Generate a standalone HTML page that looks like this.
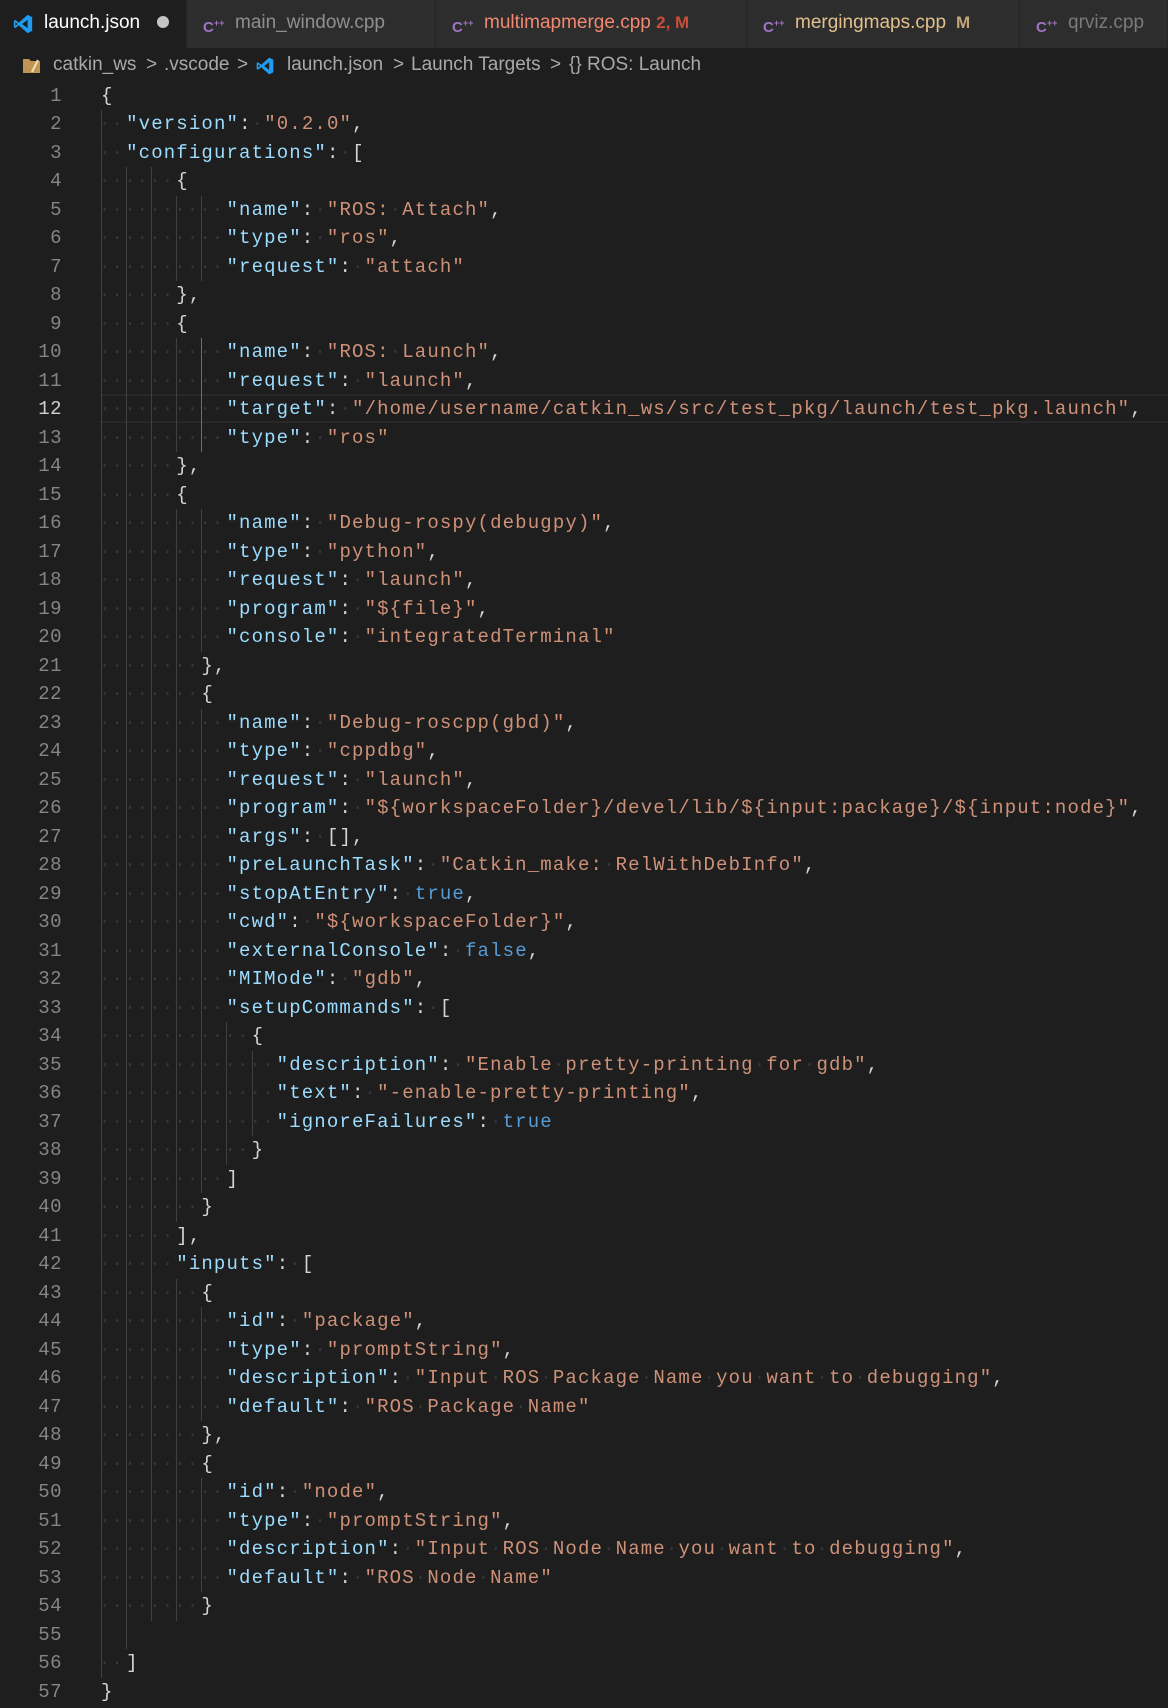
<!DOCTYPE html>
<html><head><meta charset="utf-8"><style>
*{margin:0;padding:0;box-sizing:border-box}
body{width:1168px;height:1708px;background:#1e1e1e;overflow:hidden;position:relative;font-family:"Liberation Sans",sans-serif}
#tabs{position:absolute;left:0;top:0;width:1168px;height:48px;background:#252526}
.tab{position:absolute;top:0;height:48px;background:#2d2d2d;border-right:1px solid #252526;font-size:19px;line-height:46px;color:#8f8f8f;white-space:nowrap}
.tab .ic{position:absolute;top:0;font-size:15px;font-weight:bold;color:#a074c4}
.tab .ic sup{font-size:9px}
#bc{position:absolute;top:48px;left:0;height:33px;line-height:33px;font-size:19px;color:#a9a9a9;white-space:nowrap}
#bc span{position:absolute;top:0}
#code{position:absolute;top:81.75px;left:0;width:1168px}
.L{position:relative;height:28.5px;line-height:28.5px;white-space:pre;font-family:"Liberation Mono",monospace;font-size:19px;letter-spacing:1.15px;color:#d4d4d4}
.L b{position:absolute;left:0;width:62px;text-align:right;font-weight:normal;color:#858585;letter-spacing:0.5px}
.L .c{position:absolute;left:101px;top:0}
.L i{display:inline-block;width:12.55px;height:28.5px;vertical-align:top;color:#363636;font-style:normal;text-indent:-2px;position:relative}
.L i:nth-child(odd){box-shadow:inset 1px 0 0 #404040}
.L i.a{box-shadow:inset 1px 0 0 #6e6e6e}
.L u{text-decoration:none;color:#363636}
.k{color:#9cdcfe}.s{color:#ce9178}.t{color:#569cd6}
#cur{position:absolute;left:100px;top:394.25px;width:1068px;height:28.5px;border-top:2px solid #282828;border-bottom:2px solid #282828}
</style></head><body>
<div id="tabs">
 <div class="tab" style="left:0;width:187px;background:#1e1e1e;color:#ffffff">
  <svg style="position:absolute;left:12px;top:13px" width="22" height="22" viewBox="0 0 24 24"><path d="M17 2 L22 4.5 V19.5 L17 22 L7.5 13.5 L3.5 16.5 L2 15.5 V8.5 L3.5 7.5 L7.5 10.5 Z M17 7.5 L11 12 L17 16.5 Z M3.8 10 V14 L6 12 Z" fill="#1f9cf0" fill-rule="evenodd"/></svg>
  <span style="position:absolute;left:44px">launch.json</span>
  <span style="position:absolute;left:157px;top:16px;width:12px;height:12px;border-radius:6px;background:#c5c5c5"></span>
 </div>
 <div class="tab" style="left:187px;width:249px"><span class="ic" style="left:16px">C<sup>++</sup></span><span style="position:absolute;left:48px">main_window.cpp</span></div>
 <div class="tab" style="left:436px;width:311px"><span class="ic" style="left:16px">C<sup>++</sup></span><span style="position:absolute;left:48px;color:#f48771">multimapmerge.cpp <span style="color:#c74e39;font-size:17px;font-weight:bold">2, M</span></span></div>
 <div class="tab" style="left:747px;width:273px"><span class="ic" style="left:16px">C<sup>++</sup></span><span style="position:absolute;left:48px;color:#e2c08d">mergingmaps.cpp <span style="font-size:17px;font-weight:bold;color:#c4a478">&nbsp;M</span></span></div>
 <div class="tab" style="left:1020px;width:148px"><span class="ic" style="left:16px">C<sup>++</sup></span><span style="position:absolute;left:48px;color:#7a7a7a">qrviz.cpp</span></div>
</div>
<div id="bc" style="width:1168px">
 <svg style="position:absolute;left:22px;top:7px" width="20" height="20" viewBox="0 0 20 20"><path d="M1 4 H7 L9 6 H18 V18 H1 Z" fill="#c09553"/><path d="M10 17 L16 5" stroke="#f0e0b0" stroke-width="2"/></svg>
 <span style="left:53px">catkin_ws</span><span style="left:146px">&gt;</span>
 <span style="left:164px">.vscode</span><span style="left:237px">&gt;</span>
 <svg style="position:absolute;left:255px;top:8px" width="20" height="20" viewBox="0 0 24 24"><path d="M17 2 L22 4.5 V19.5 L17 22 L7.5 13.5 L3.5 16.5 L2 15.5 V8.5 L3.5 7.5 L7.5 10.5 Z M17 7.5 L11 12 L17 16.5 Z M3.8 10 V14 L6 12 Z" fill="#1f9cf0" fill-rule="evenodd"/></svg>
 <span style="left:287px">launch.json</span><span style="left:393px">&gt;</span>
 <span style="left:411px">Launch Targets</span><span style="left:550px">&gt;</span>
 <span style="left:569px">{} ROS: Launch</span>
</div>
<div id="cur"></div>
<div id="code">
<div class="L"><b>1</b><span class="c">{</span></div>
<div class="L"><b>2</b><span class="c"><i>·</i><i>·</i><span class="k">"version"</span>:<u>·</u><span class="s">"0.2.0"</span>,</span></div>
<div class="L"><b>3</b><span class="c"><i>·</i><i>·</i><span class="k">"configurations"</span>:<u>·</u>[</span></div>
<div class="L"><b>4</b><span class="c"><i>·</i><i>·</i><i>·</i><i>·</i><i>·</i><i>·</i>{</span></div>
<div class="L"><b>5</b><span class="c"><i>·</i><i>·</i><i>·</i><i>·</i><i>·</i><i>·</i><i>·</i><i>·</i><i>·</i><i>·</i><span class="k">"name"</span>:<u>·</u><span class="s">"ROS:<u>·</u>Attach"</span>,</span></div>
<div class="L"><b>6</b><span class="c"><i>·</i><i>·</i><i>·</i><i>·</i><i>·</i><i>·</i><i>·</i><i>·</i><i>·</i><i>·</i><span class="k">"type"</span>:<u>·</u><span class="s">"ros"</span>,</span></div>
<div class="L"><b>7</b><span class="c"><i>·</i><i>·</i><i>·</i><i>·</i><i>·</i><i>·</i><i>·</i><i>·</i><i>·</i><i>·</i><span class="k">"request"</span>:<u>·</u><span class="s">"attach"</span></span></div>
<div class="L"><b>8</b><span class="c"><i>·</i><i>·</i><i>·</i><i>·</i><i>·</i><i>·</i>},</span></div>
<div class="L"><b>9</b><span class="c"><i>·</i><i>·</i><i>·</i><i>·</i><i>·</i><i>·</i>{</span></div>
<div class="L"><b>10</b><span class="c"><i>·</i><i>·</i><i>·</i><i>·</i><i>·</i><i>·</i><i>·</i><i>·</i><i class="a">·</i><i>·</i><span class="k">"name"</span>:<u>·</u><span class="s">"ROS:<u>·</u>Launch"</span>,</span></div>
<div class="L"><b>11</b><span class="c"><i>·</i><i>·</i><i>·</i><i>·</i><i>·</i><i>·</i><i>·</i><i>·</i><i class="a">·</i><i>·</i><span class="k">"request"</span>:<u>·</u><span class="s">"launch"</span>,</span></div>
<div class="L"><b style="color:#d0d0d0">12</b><span class="c"><i>·</i><i>·</i><i>·</i><i>·</i><i>·</i><i>·</i><i>·</i><i>·</i><i class="a">·</i><i>·</i><span class="k">"target"</span>:<u>·</u><span class="s">"/home/username/catkin_ws/src/test_pkg/launch/test_pkg.launch"</span>,</span></div>
<div class="L"><b>13</b><span class="c"><i>·</i><i>·</i><i>·</i><i>·</i><i>·</i><i>·</i><i>·</i><i>·</i><i class="a">·</i><i>·</i><span class="k">"type"</span>:<u>·</u><span class="s">"ros"</span></span></div>
<div class="L"><b>14</b><span class="c"><i>·</i><i>·</i><i>·</i><i>·</i><i>·</i><i>·</i>},</span></div>
<div class="L"><b>15</b><span class="c"><i>·</i><i>·</i><i>·</i><i>·</i><i>·</i><i>·</i>{</span></div>
<div class="L"><b>16</b><span class="c"><i>·</i><i>·</i><i>·</i><i>·</i><i>·</i><i>·</i><i>·</i><i>·</i><i>·</i><i>·</i><span class="k">"name"</span>:<u>·</u><span class="s">"Debug-rospy(debugpy)"</span>,</span></div>
<div class="L"><b>17</b><span class="c"><i>·</i><i>·</i><i>·</i><i>·</i><i>·</i><i>·</i><i>·</i><i>·</i><i>·</i><i>·</i><span class="k">"type"</span>:<u>·</u><span class="s">"python"</span>,</span></div>
<div class="L"><b>18</b><span class="c"><i>·</i><i>·</i><i>·</i><i>·</i><i>·</i><i>·</i><i>·</i><i>·</i><i>·</i><i>·</i><span class="k">"request"</span>:<u>·</u><span class="s">"launch"</span>,</span></div>
<div class="L"><b>19</b><span class="c"><i>·</i><i>·</i><i>·</i><i>·</i><i>·</i><i>·</i><i>·</i><i>·</i><i>·</i><i>·</i><span class="k">"program"</span>:<u>·</u><span class="s">"${file}"</span>,</span></div>
<div class="L"><b>20</b><span class="c"><i>·</i><i>·</i><i>·</i><i>·</i><i>·</i><i>·</i><i>·</i><i>·</i><i>·</i><i>·</i><span class="k">"console"</span>:<u>·</u><span class="s">"integratedTerminal"</span></span></div>
<div class="L"><b>21</b><span class="c"><i>·</i><i>·</i><i>·</i><i>·</i><i>·</i><i>·</i><i>·</i><i>·</i>},</span></div>
<div class="L"><b>22</b><span class="c"><i>·</i><i>·</i><i>·</i><i>·</i><i>·</i><i>·</i><i>·</i><i>·</i>{</span></div>
<div class="L"><b>23</b><span class="c"><i>·</i><i>·</i><i>·</i><i>·</i><i>·</i><i>·</i><i>·</i><i>·</i><i>·</i><i>·</i><span class="k">"name"</span>:<u>·</u><span class="s">"Debug-roscpp(gbd)"</span>,</span></div>
<div class="L"><b>24</b><span class="c"><i>·</i><i>·</i><i>·</i><i>·</i><i>·</i><i>·</i><i>·</i><i>·</i><i>·</i><i>·</i><span class="k">"type"</span>:<u>·</u><span class="s">"cppdbg"</span>,</span></div>
<div class="L"><b>25</b><span class="c"><i>·</i><i>·</i><i>·</i><i>·</i><i>·</i><i>·</i><i>·</i><i>·</i><i>·</i><i>·</i><span class="k">"request"</span>:<u>·</u><span class="s">"launch"</span>,</span></div>
<div class="L"><b>26</b><span class="c"><i>·</i><i>·</i><i>·</i><i>·</i><i>·</i><i>·</i><i>·</i><i>·</i><i>·</i><i>·</i><span class="k">"program"</span>:<u>·</u><span class="s">"${workspaceFolder}/devel/lib/${input:package}/${input:node}"</span>,</span></div>
<div class="L"><b>27</b><span class="c"><i>·</i><i>·</i><i>·</i><i>·</i><i>·</i><i>·</i><i>·</i><i>·</i><i>·</i><i>·</i><span class="k">"args"</span>:<u>·</u>[],</span></div>
<div class="L"><b>28</b><span class="c"><i>·</i><i>·</i><i>·</i><i>·</i><i>·</i><i>·</i><i>·</i><i>·</i><i>·</i><i>·</i><span class="k">"preLaunchTask"</span>:<u>·</u><span class="s">"Catkin_make:<u>·</u>RelWithDebInfo"</span>,</span></div>
<div class="L"><b>29</b><span class="c"><i>·</i><i>·</i><i>·</i><i>·</i><i>·</i><i>·</i><i>·</i><i>·</i><i>·</i><i>·</i><span class="k">"stopAtEntry"</span>:<u>·</u><span class="t">true</span>,</span></div>
<div class="L"><b>30</b><span class="c"><i>·</i><i>·</i><i>·</i><i>·</i><i>·</i><i>·</i><i>·</i><i>·</i><i>·</i><i>·</i><span class="k">"cwd"</span>:<u>·</u><span class="s">"${workspaceFolder}"</span>,</span></div>
<div class="L"><b>31</b><span class="c"><i>·</i><i>·</i><i>·</i><i>·</i><i>·</i><i>·</i><i>·</i><i>·</i><i>·</i><i>·</i><span class="k">"externalConsole"</span>:<u>·</u><span class="t">false</span>,</span></div>
<div class="L"><b>32</b><span class="c"><i>·</i><i>·</i><i>·</i><i>·</i><i>·</i><i>·</i><i>·</i><i>·</i><i>·</i><i>·</i><span class="k">"MIMode"</span>:<u>·</u><span class="s">"gdb"</span>,</span></div>
<div class="L"><b>33</b><span class="c"><i>·</i><i>·</i><i>·</i><i>·</i><i>·</i><i>·</i><i>·</i><i>·</i><i>·</i><i>·</i><span class="k">"setupCommands"</span>:<u>·</u>[</span></div>
<div class="L"><b>34</b><span class="c"><i>·</i><i>·</i><i>·</i><i>·</i><i>·</i><i>·</i><i>·</i><i>·</i><i>·</i><i>·</i><i>·</i><i>·</i>{</span></div>
<div class="L"><b>35</b><span class="c"><i>·</i><i>·</i><i>·</i><i>·</i><i>·</i><i>·</i><i>·</i><i>·</i><i>·</i><i>·</i><i>·</i><i>·</i><i>·</i><i>·</i><span class="k">"description"</span>:<u>·</u><span class="s">"Enable<u>·</u>pretty-printing<u>·</u>for<u>·</u>gdb"</span>,</span></div>
<div class="L"><b>36</b><span class="c"><i>·</i><i>·</i><i>·</i><i>·</i><i>·</i><i>·</i><i>·</i><i>·</i><i>·</i><i>·</i><i>·</i><i>·</i><i>·</i><i>·</i><span class="k">"text"</span>:<u>·</u><span class="s">"-enable-pretty-printing"</span>,</span></div>
<div class="L"><b>37</b><span class="c"><i>·</i><i>·</i><i>·</i><i>·</i><i>·</i><i>·</i><i>·</i><i>·</i><i>·</i><i>·</i><i>·</i><i>·</i><i>·</i><i>·</i><span class="k">"ignoreFailures"</span>:<u>·</u><span class="t">true</span></span></div>
<div class="L"><b>38</b><span class="c"><i>·</i><i>·</i><i>·</i><i>·</i><i>·</i><i>·</i><i>·</i><i>·</i><i>·</i><i>·</i><i>·</i><i>·</i>}</span></div>
<div class="L"><b>39</b><span class="c"><i>·</i><i>·</i><i>·</i><i>·</i><i>·</i><i>·</i><i>·</i><i>·</i><i>·</i><i>·</i>]</span></div>
<div class="L"><b>40</b><span class="c"><i>·</i><i>·</i><i>·</i><i>·</i><i>·</i><i>·</i><i>·</i><i>·</i>}</span></div>
<div class="L"><b>41</b><span class="c"><i>·</i><i>·</i><i>·</i><i>·</i><i>·</i><i>·</i>],</span></div>
<div class="L"><b>42</b><span class="c"><i>·</i><i>·</i><i>·</i><i>·</i><i>·</i><i>·</i><span class="k">"inputs"</span>:<u>·</u>[</span></div>
<div class="L"><b>43</b><span class="c"><i>·</i><i>·</i><i>·</i><i>·</i><i>·</i><i>·</i><i>·</i><i>·</i>{</span></div>
<div class="L"><b>44</b><span class="c"><i>·</i><i>·</i><i>·</i><i>·</i><i>·</i><i>·</i><i>·</i><i>·</i><i>·</i><i>·</i><span class="k">"id"</span>:<u>·</u><span class="s">"package"</span>,</span></div>
<div class="L"><b>45</b><span class="c"><i>·</i><i>·</i><i>·</i><i>·</i><i>·</i><i>·</i><i>·</i><i>·</i><i>·</i><i>·</i><span class="k">"type"</span>:<u>·</u><span class="s">"promptString"</span>,</span></div>
<div class="L"><b>46</b><span class="c"><i>·</i><i>·</i><i>·</i><i>·</i><i>·</i><i>·</i><i>·</i><i>·</i><i>·</i><i>·</i><span class="k">"description"</span>:<u>·</u><span class="s">"Input<u>·</u>ROS<u>·</u>Package<u>·</u>Name<u>·</u>you<u>·</u>want<u>·</u>to<u>·</u>debugging"</span>,</span></div>
<div class="L"><b>47</b><span class="c"><i>·</i><i>·</i><i>·</i><i>·</i><i>·</i><i>·</i><i>·</i><i>·</i><i>·</i><i>·</i><span class="k">"default"</span>:<u>·</u><span class="s">"ROS<u>·</u>Package<u>·</u>Name"</span></span></div>
<div class="L"><b>48</b><span class="c"><i>·</i><i>·</i><i>·</i><i>·</i><i>·</i><i>·</i><i>·</i><i>·</i>},</span></div>
<div class="L"><b>49</b><span class="c"><i>·</i><i>·</i><i>·</i><i>·</i><i>·</i><i>·</i><i>·</i><i>·</i>{</span></div>
<div class="L"><b>50</b><span class="c"><i>·</i><i>·</i><i>·</i><i>·</i><i>·</i><i>·</i><i>·</i><i>·</i><i>·</i><i>·</i><span class="k">"id"</span>:<u>·</u><span class="s">"node"</span>,</span></div>
<div class="L"><b>51</b><span class="c"><i>·</i><i>·</i><i>·</i><i>·</i><i>·</i><i>·</i><i>·</i><i>·</i><i>·</i><i>·</i><span class="k">"type"</span>:<u>·</u><span class="s">"promptString"</span>,</span></div>
<div class="L"><b>52</b><span class="c"><i>·</i><i>·</i><i>·</i><i>·</i><i>·</i><i>·</i><i>·</i><i>·</i><i>·</i><i>·</i><span class="k">"description"</span>:<u>·</u><span class="s">"Input<u>·</u>ROS<u>·</u>Node<u>·</u>Name<u>·</u>you<u>·</u>want<u>·</u>to<u>·</u>debugging"</span>,</span></div>
<div class="L"><b>53</b><span class="c"><i>·</i><i>·</i><i>·</i><i>·</i><i>·</i><i>·</i><i>·</i><i>·</i><i>·</i><i>·</i><span class="k">"default"</span>:<u>·</u><span class="s">"ROS<u>·</u>Node<u>·</u>Name"</span></span></div>
<div class="L"><b>54</b><span class="c"><i>·</i><i>·</i><i>·</i><i>·</i><i>·</i><i>·</i><i>·</i><i>·</i>}</span></div>
<div class="L"><b>55</b><span class="c"><i style="color:transparent">·</i><i style="color:transparent">·</i><i style="color:transparent">·</i></span></div>
<div class="L"><b>56</b><span class="c"><i>·</i><i>·</i>]</span></div>
<div class="L"><b>57</b><span class="c">}</span></div>
</div>
</body></html>
